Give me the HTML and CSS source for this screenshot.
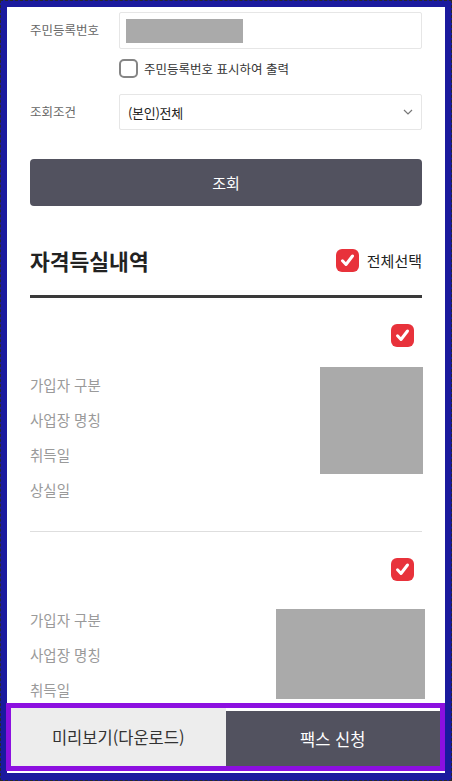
FILE: index.html
```html
<!DOCTYPE html>
<html lang="ko">
<head>
<meta charset="utf-8">
<title>자격득실내역</title>
<link rel="stylesheet" href="styles.css">
</head>
<body>
<div class="screen">
  <div class="frame">
    <div class="content">
      <div class="form-row">
        <span class="label">주민등록번호</span>
        <div class="field"><span class="redact redact-rrn"></span></div>
      </div>
      <label class="opt-row">
        <span class="box-empty"></span>
        <span class="opt-text">주민등록번호 표시하여 출력</span>
      </label>
      <div class="form-row form-row-select">
        <span class="label">조회조건</span>
        <div class="field select">
          <span class="select-text">(본인)전체</span>
          <svg class="chev" width="10" height="6" viewBox="0 0 10 6"><path d="M1 1 L5 5 L9 1" fill="none" stroke="#777" stroke-width="1.2"/></svg>
        </div>
      </div>
      <button class="search-btn">조회</button>

      <div class="section-head">
        <h2 class="section-title">자격득실내역</h2>
        <div class="select-all">
          <span class="check-red"><svg width="23" height="23" viewBox="0 0 23 23"><path d="M6.5 11.8 L10 15.5 L16.5 7" fill="none" stroke="#fff" stroke-width="3" stroke-linecap="round" stroke-linejoin="round"/></svg></span>
          <span class="select-all-text">전체선택</span>
        </div>
      </div>

      <div class="item">
        <div class="item-check"><span class="check-red"><svg width="23" height="23" viewBox="0 0 23 23"><path d="M6.5 11.8 L10 15.5 L16.5 7" fill="none" stroke="#fff" stroke-width="3" stroke-linecap="round" stroke-linejoin="round"/></svg></span></div>
        <div class="item-body">
          <ul class="item-labels">
            <li>가입자 구분</li>
            <li>사업장 명칭</li>
            <li>취득일</li>
            <li>상실일</li>
          </ul>
          <div class="item-values"><span class="redact redact-a"></span></div>
        </div>
      </div>

      <div class="item">
        <div class="item-check"><span class="check-red"><svg width="23" height="23" viewBox="0 0 23 23"><path d="M6.5 11.8 L10 15.5 L16.5 7" fill="none" stroke="#fff" stroke-width="3" stroke-linecap="round" stroke-linejoin="round"/></svg></span></div>
        <div class="item-body">
          <ul class="item-labels">
            <li>가입자 구분</li>
            <li>사업장 명칭</li>
            <li>취득일</li>
          </ul>
          <div class="item-values"><span class="redact redact-b"></span></div>
        </div>
      </div>
    </div>

    <div class="bottom-bar">
      <button class="btn-preview">미리보기(다운로드)</button>
      <button class="btn-fax">팩스 신청</button>
    </div>
  </div>
</div>
</body>
</html>
```
FILE: styles.css
```css
* { box-sizing: border-box; }
html, body { margin: 0; padding: 0; background: #1b1a9e; }
body {
  font-family: "Noto Sans CJK KR", "Noto Sans", sans-serif;
  color: #222;
}
.screen {
  width: 452px;
  height: 781px;
  border: 1px dashed #2a2a2a;
  background: #1b1a9e;
}
.frame {
  height: 100%;
  border: 6px solid #1b1a9e;
  border-bottom-width: 7px;
  background: #fff;
  overflow: hidden;
}
.content {
  padding: 5px 23px 0 23px;
}
.form-row {
  display: flex;
  align-items: center;
}
.label {
  width: 89px;
  flex: none;
  font-size: 12.5px;
  color: #666;
  align-self: flex-start;
  padding-top: 8px;
}
.form-row-select .label { padding-top: 8px; }
.field {
  flex: 1;
  height: 37px;
  border: 1px solid #e6e6e6;
  border-radius: 2px;
  display: flex;
  align-items: center;
  padding-left: 6px;
}
.redact { display: block; background: #aaa; }
.redact-rrn { width: 117px; height: 24px; }
.opt-row {
  display: flex;
  align-items: center;
  margin: 10px 0 0 89px;
  height: 18px;
}
.box-empty {
  width: 19px;
  height: 19px;
  border: 2px solid #858585;
  border-radius: 5px;
  flex: none;
}
.opt-text {
  margin-left: 6px;
  font-size: 12.5px;
  color: #333;
}
.form-row-select { margin-top: 17px; }
.select {
  height: 36px;
  justify-content: space-between;
  padding: 0 7px 0 8px;
}
.select-text { font-size: 13px; color: #222; letter-spacing: -0.3px; }
.chev { margin-right: 1px; }
.search-btn {
  display: block;
  width: 100%;
  height: 47px;
  margin-top: 29px;
  border: none;
  border-radius: 4px;
  background: #52525f;
  color: #fff;
  font-family: inherit;
  font-size: 15px;
}
.section-head {
  display: flex;
  justify-content: space-between;
  align-items: center;
  margin-top: 42px;
  padding-bottom: 23px;
  border-bottom: 3px solid #3a3a3a;
  box-sizing: content-box;
  height: 24px;
}
.section-title {
  margin: 0;
  font-size: 21.5px;
  font-weight: 700;
  color: #222;
}
.select-all { display: flex; align-items: center; }
.select-all-text {
  margin-left: 8px;
  font-size: 15px;
  color: #222;
}
.check-red {
  display: block;
  width: 23px;
  height: 23px;
  background: #e8323b;
  border-radius: 6px;
}
.check-red svg { display: block; }
.item {
  padding: 26px 0 24px;
  border-bottom: 1px solid #dedede;
}
.item-check {
  display: flex;
  justify-content: flex-end;
  padding-right: 8px;
}
.item-body {
  display: flex;
  justify-content: space-between;
  margin-top: 20px;
}
.item-labels {
  list-style: none;
  margin: 0;
  padding: 0;
}
.item-labels li {
  height: 35px;
  line-height: 35px;
  font-size: 14.5px;
  color: #9a9a9a;
}
.item-values { margin-right: -1px; }
.redact-a { width: 103px; height: 107px; }
.item + .item .item-body { margin-top: 21px; }
.redact-b { width: 149px; height: 90px; margin-top: 7px; margin-right: -2px; }

.bottom-bar {
  position: fixed;
  left: 6px;
  top: 703px;
  width: 439px;
  height: 68px;
  border: 5px solid #8c10e0;
  background: #fff;
  display: flex;
  align-items: stretch;
}
.bottom-bar button {
  flex: 1;
  border: none;
  margin: 0;
  font-family: inherit;
  font-size: 16.5px;
}
.btn-preview { background: #ededed; color: #333; }
.btn-fax { background: #52525f; color: #fff; margin-top: 3px !important; }
```
